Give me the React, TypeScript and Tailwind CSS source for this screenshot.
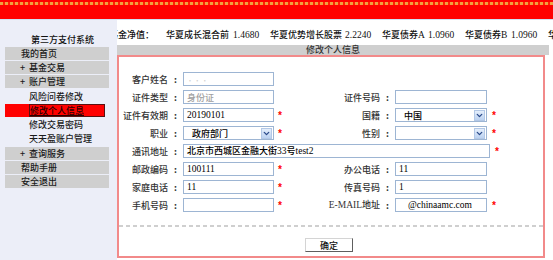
import type { ReactNode } from "react";
import { ChevronDown } from "lucide-react";

// latin text in the old page is half-width and serif-ish
const M = ({ children }: { children: ReactNode }) => (
  <span className="font-['Liberation_Serif'] text-[9.5px]">{children}</span>
);

const Star = () => (
  <span className="font-['Liberation_Mono'] text-[10px] leading-none text-[#ff0000] pt-[4px] font-bold">*</span>
);

function Input({ children, w = "w-[91px]", tone = "text-black", pad = "pl-[3px]" }: { children?: ReactNode; w?: string; tone?: string; pad?: string }) {
  return (
    <div className={`${w} ${tone} ${pad} h-[14px] shrink-0 border border-[#9db5d3] bg-white flex items-center`}>
      <span className="whitespace-nowrap">{children}</span>
    </div>
  );
}

function Select({ children, w = "w-[91px]" }: { children?: ReactNode; w?: string }) {
  return (
    <div className={`${w} h-[14px] shrink-0 border border-[#9db5d3] bg-white flex items-center pl-[8px] pr-px text-black`}>
      <span className="flex-1">{children}</span>
      <span className="w-[11px] h-[11px] bg-gradient-to-b from-[#e4eefb] to-[#bcd2f1] border border-[#b3c8e6] flex items-center justify-center">
        <ChevronDown size={9} strokeWidth={3.5} className="text-[#2a4a8a]" />
      </span>
    </div>
  );
}

function Row({
  label,
  field,
  star,
  rLabel,
  rField,
  rStar,
}: {
  label: ReactNode;
  field: ReactNode;
  star?: boolean;
  rLabel?: ReactNode;
  rField?: ReactNode;
  rStar?: boolean;
}) {
  return (
    <div className="flex items-center h-[14px]">
      <span className="w-[49px] text-right whitespace-nowrap">{label}</span>
      <span className="w-[15px] text-center font-bold">:</span>
      {field}
      <span className="w-[16px] shrink-0 pl-[3px] flex">{star && <Star />}</span>
      {rLabel && (
        <>
          <span className="w-[90px] text-right whitespace-nowrap">{rLabel}</span>
          <span className="w-[15px] text-center font-bold">:</span>
          {rField}
          <span className="pl-[4px] flex">{rStar && <Star />}</span>
        </>
      )}
    </div>
  );
}

function Bar({ children, plus }: { children: ReactNode; plus?: boolean }) {
  return (
    <div className={`ml-[5px] w-[104px] h-[13px] mb-px bg-[#cfcfcf] flex items-center text-[#1a1a1a] ${plus ? "pl-[15px]" : "pl-[16px]"}`}>
      {plus && <span className="w-[9px]">+</span>}
      {children}
    </div>
  );
}

const Sub = ({ children }: { children: ReactNode }) => (
  <div className="h-[14px] pl-[29px] flex items-center text-[#1a1a1a]">{children}</div>
);

const ticker = [
  { w: "w-[57px]", t: "基金净值：" },
  { w: "w-[67px]", t: "华夏成长混合前" },
  { w: "w-[37px]", t: <M>1.4680</M> },
  { w: "w-[75px]", t: "华夏优势增长股票" },
  { w: "w-[37px]", t: <M>2.2240</M> },
  { w: "w-[46px]", t: <>华夏债券<M>A</M></> },
  { w: "w-[37px]", t: <M>1.0960</M> },
  { w: "w-[46px]", t: <>华夏债券<M>B</M></> },
  { w: "w-[37px]", t: <M>1.0960</M> },
  { w: "w-[60px]", t: "华夏回报" },
];

export default function App() {
  return (
    <div className="w-[553px] h-[260px] overflow-hidden bg-white font-['Noto_Sans_CJK_SC',sans-serif] font-medium text-[9px] leading-none text-[#222]">
      {/* top banner */}
      <div className="h-[19px] bg-[#ff0000] pt-[2px]">
        <div className="h-[3px] bg-[repeating-linear-gradient(90deg,#f0a040_0_3px,#ff2200_3px_5px)]" />
      </div>
      <div className="h-px bg-[#cfe1f3]" />

      <div className="flex h-[240px]">
        {/* Sidebar */}
        <aside className="w-[117px] shrink-0 bg-[#eceef8]">
          <div className="h-[27px] flex items-end justify-center pl-[8px] pb-[2px] leading-[10px] text-[#111]">
            第三方支付系统
          </div>
          <Bar>我的首页</Bar>
          <Bar plus>基金交易</Bar>
          <Bar plus>账户管理</Bar>
          <Sub>风险问卷修改</Sub>
          <div className="ml-[5px] mt-px w-[100px] h-[13px] bg-[#ff0000] flex">
            <span className="ml-[24px] flex-1 border border-[#5a1010] flex items-center text-[#2a0000] underline">
              修改个人信息
            </span>
          </div>
          <Sub>修改交易密码</Sub>
          <Sub>天天盈账户管理</Sub>
          <div className="mt-[2px]">
            <Bar plus>查询服务</Bar>
            <Bar>帮助手册</Bar>
            <Bar>安全退出</Bar>
          </div>
        </aside>

        {/* Main */}
        <main className="flex-1 min-w-0 flex flex-col">
          <div className="h-[25px] pt-[5px] flex items-center overflow-hidden whitespace-nowrap text-[#111]">
            <div className="flex -ml-[8px]">
              {ticker.map((it, i) => (
                <span key={i} className={`${it.w} shrink-0`}>
                  {it.t}
                </span>
              ))}
            </div>
          </div>

          <div className="mr-[4px] h-[10px] bg-[#cfcfcf] text-center leading-[10px] text-[#333]">修改个人信息</div>

          <div className="mr-[8px] h-[203px] border-2 border-[#f28a8a] pt-[15px] text-[#333]">
            <div className="flex flex-col gap-[4px]">
              <Row
                label="客户姓名"
                field={
                  <Input tone="text-[#d0d0d0]">
                    <span className="text-[6px]">· ·  ·</span>
                  </Input>
                }
              />
              <Row
                label="证件类型"
                field={<Input tone="text-[#a0a0a0]">身份证</Input>}
                rLabel="证件号码"
                rField={<Input w="w-[92px]" />}
              />
              <Row
                label="证件有效期"
                field={
                  <Input>
                    <M>20190101</M>
                  </Input>
                }
                star
                rLabel="国籍"
                rField={<Select w="w-[92px]">中国</Select>}
                rStar
              />
              <Row
                label="职业"
                field={<Select>政府部门</Select>}
                star
                rLabel="性别"
                rField={<Select w="w-[92px]" />}
                rStar
              />
              <div className="flex items-center h-[14px]">
                <span className="w-[49px] text-right">通讯地址</span>
                <span className="w-[15px] text-center font-bold">:</span>
                <Input w="w-[307px]">
                  北京市西城区金融大街<M>33</M>号<M>test2</M>
                </Input>
                <span className="pl-[4px] flex">
                  <Star />
                </span>
              </div>
              <Row
                label="邮政编码"
                field={
                  <Input>
                    <M>100111</M>
                  </Input>
                }
                star
                rLabel="办公电话"
                rField={
                  <Input w="w-[92px]">
                    <M>11</M>
                  </Input>
                }
              />
              <Row
                label="家庭电话"
                field={
                  <Input>
                    <M>11</M>
                  </Input>
                }
                star
                rLabel="传真号码"
                rField={
                  <Input w="w-[92px]">
                    <M>1</M>
                  </Input>
                }
              />
              <Row
                label="手机号码"
                field={<Input />}
                star
                rLabel={
                  <>
                    <M>E-MAIL</M>地址
                  </>
                }
                rField={
                  <Input w="w-[92px]" pad="pl-[12px]">
                    <M>@chinaamc.com</M>
                  </Input>
                }
                rStar
              />
            </div>

            <div className="mt-[13px] h-[2px] bg-[repeating-linear-gradient(90deg,#cfcfcf_0_4px,transparent_4px_7px)]" />

            <button className="mt-[11px] ml-[186px] w-[48px] h-[14px] bg-white border border-t-[#d4d4d4] border-l-[#d4d4d4] border-r-[#5e5e5e] border-b-[#5e5e5e] flex items-center justify-center text-[#111] leading-none">
              确定
            </button>
          </div>
        </main>
      </div>
    </div>
  );
}
